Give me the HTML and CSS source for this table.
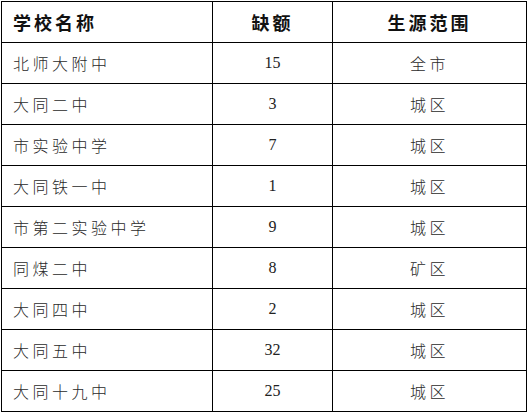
FILE: index.html
```html
<!DOCTYPE html>
<html lang="zh-CN">
<head>
<meta charset="utf-8">
<title>缺额</title>
<link rel="stylesheet" href="styles.css">
</head>
<body>
<div class="wrap">
<table class="quota">
  <colgroup>
    <col class="c-name">
    <col class="c-num">
    <col class="c-area">
  </colgroup>
  <thead>
    <tr><th class="left">学校名称</th><th>缺额</th><th>生源范围</th></tr>
  </thead>
  <tbody>
    <tr><td class="left">北师大附中</td><td class="num">15</td><td>全市</td></tr>
    <tr><td class="left">大同二中</td><td class="num">3</td><td>城区</td></tr>
    <tr><td class="left">市实验中学</td><td class="num">7</td><td>城区</td></tr>
    <tr><td class="left">大同铁一中</td><td class="num">1</td><td>城区</td></tr>
    <tr><td class="left">市第二实验中学</td><td class="num">9</td><td>城区</td></tr>
    <tr><td class="left">同煤二中</td><td class="num">8</td><td>矿区</td></tr>
    <tr><td class="left">大同四中</td><td class="num">2</td><td>城区</td></tr>
    <tr><td class="left">大同五中</td><td class="num">32</td><td>城区</td></tr>
    <tr><td class="left">大同十九中</td><td class="num">25</td><td>城区</td></tr>
  </tbody>
</table>
</div>
</body>
</html>
```
FILE: styles.css
```css
html, body {
  margin: 0;
  padding: 0;
  background: #fff;
}
.wrap {
  padding: 1px 0 0 1px;
}
.quota {
  border-collapse: collapse;
  table-layout: fixed;
  width: 525px;
  font-family: "Noto Sans CJK SC", "Liberation Serif", serif;
}
.c-name { width: 211px; }
.c-num { width: 120px; }
.c-area { width: 194px; }
.quota th, .quota td {
  border: 1px solid #000;
  height: 40px;
  padding: 0;
  text-align: center;
  vertical-align: middle;
  line-height: 20px;
}
.quota th {
  font-size: 18px;
  font-weight: 700;
  color: #111;
  letter-spacing: 3px;
}
.quota td {
  font-size: 16px;
  font-weight: 300;
  color: #2a2a2a;
  letter-spacing: 3.5px;
}
.quota .left {
  text-align: left;
  padding-left: 11px;
}
.quota td.num {
  font-family: "Liberation Serif", serif;
  font-size: 16px;
  letter-spacing: 0;
  color: #222;
}
```
